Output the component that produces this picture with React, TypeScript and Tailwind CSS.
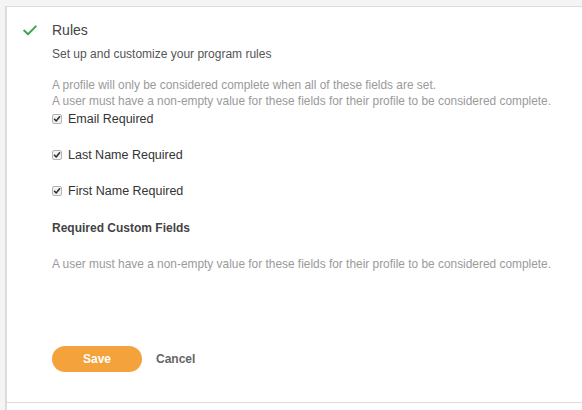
import React from 'react';

const fields = ['Email Required', 'Last Name Required', 'First Name Required'];

const Checkbox: React.FC = () => (
  <span className="flex h-[10px] w-[10px] items-center justify-center rounded-[2px] border border-[#b3b3b3] bg-[#f2f2f2]">
    <svg width="8" height="8" viewBox="0 0 8 8" fill="none">
      <path d="M1.5 4.2 L3.2 5.9 L6.6 1.8" stroke="#333" strokeWidth="1.6" strokeLinecap="round" strokeLinejoin="round" />
    </svg>
  </span>
);

const App: React.FC = () => {
  return (
    <div className="min-h-screen bg-[#f4f4f4] pl-[5px] pt-[6px] font-['Liberation_Sans',Arial,sans-serif]">
      <div className="border-l-2 border-t border-[#dcdcdc] bg-white min-h-[404px]">
        <section className="h-[396px] border-b border-[#dcdcdc] pt-[13px]">
          {/* header */}
          <div className="flex h-[20px] items-center pl-[16px]">
            <svg width="14" height="11" viewBox="0 0 14 11" fill="none">
              <path d="M1.2 5.6 L5 9.2 L12.8 1.4" stroke="#3fa64a" strokeWidth="2" strokeLinecap="round" strokeLinejoin="round" />
            </svg>
            <h2 className="ml-[15px] text-[14px] leading-[20px] text-[#444]">Rules</h2>
          </div>

          <div className="ml-[45px]">
            <p className="mt-[6px] text-[12px] leading-[16px] text-[#555]">Set up and customize your program rules</p>

            <div className="mt-[15px] text-[11.9px] leading-[16px] text-[#9a9a9a]">
              <p>A profile will only be considered complete when all of these fields are set.</p>
              <p>A user must have a non-empty value for these fields for their profile to be considered complete.</p>
            </div>

            <div className="mt-[2px] flex flex-col gap-[20px]">
              {fields.map(f => (
                <label key={f} className="flex h-[16px] items-center gap-[6px] text-[12.5px] leading-[16px] text-[#333]">
                  <Checkbox />
                  <span>{f}</span>
                </label>
              ))}
            </div>

            <h3 className="mt-[21px] text-[12px] font-bold leading-[16px] text-[#444]">Required Custom Fields</h3>
            <p className="mt-[20px] text-[11.9px] leading-[16px] text-[#9a9a9a]">
              A user must have a non-empty value for these fields for their profile to be considered complete.
            </p>

            <div className="mt-[74px] flex items-center gap-[14px]">
              <button className="h-[26px] w-[90px] rounded-full bg-[#f4a23c] text-[12px] font-bold text-white">Save</button>
              <button className="text-[12px] font-bold text-[#666]">Cancel</button>
            </div>
          </div>
        </section>
      </div>
    </div>
  );
};

export default App;
